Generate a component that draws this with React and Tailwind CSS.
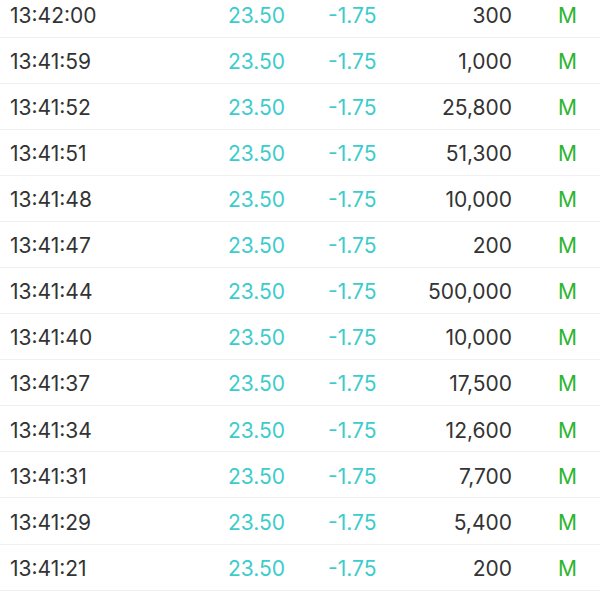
import React from "react";

const rows = [
  ["13:42:00", "300"],
  ["13:41:59", "1,000"],
  ["13:41:52", "25,800"],
  ["13:41:51", "51,300"],
  ["13:41:48", "10,000"],
  ["13:41:47", "200"],
  ["13:41:44", "500,000"],
  ["13:41:40", "10,000"],
  ["13:41:37", "17,500"],
  ["13:41:34", "12,600"],
  ["13:41:31", "7,700"],
  ["13:41:29", "5,400"],
  ["13:41:21", "200"],
];

export default function App() {
  return (
    <div className="w-[600px] h-[600px] overflow-hidden bg-white" style={{ fontFamily: "Inter, 'Liberation Sans', sans-serif" }}>
      <div className="-mt-[8.6px]">
        {rows.map(([t, v], i) => (
          <div key={i} className="h-[46.1px] pt-[3px] flex items-center border-b border-[#f0f0f0] text-[21px] font-[380]">
            <div className="w-[220px] pl-[10px] text-[#333333]">{t}</div>
            <div className="w-[100px] pl-[8px] text-[#3dcccc]">23.50</div>
            <div className="w-[100px] pl-[8px] text-[#3dcccc]">-1.75</div>
            <div className="w-[92px] text-right text-[#333333]">{v}</div>
            <div className="pl-[46px] text-[#2db52d]">M</div>
          </div>
        ))}
      </div>
    </div>
  );
}
